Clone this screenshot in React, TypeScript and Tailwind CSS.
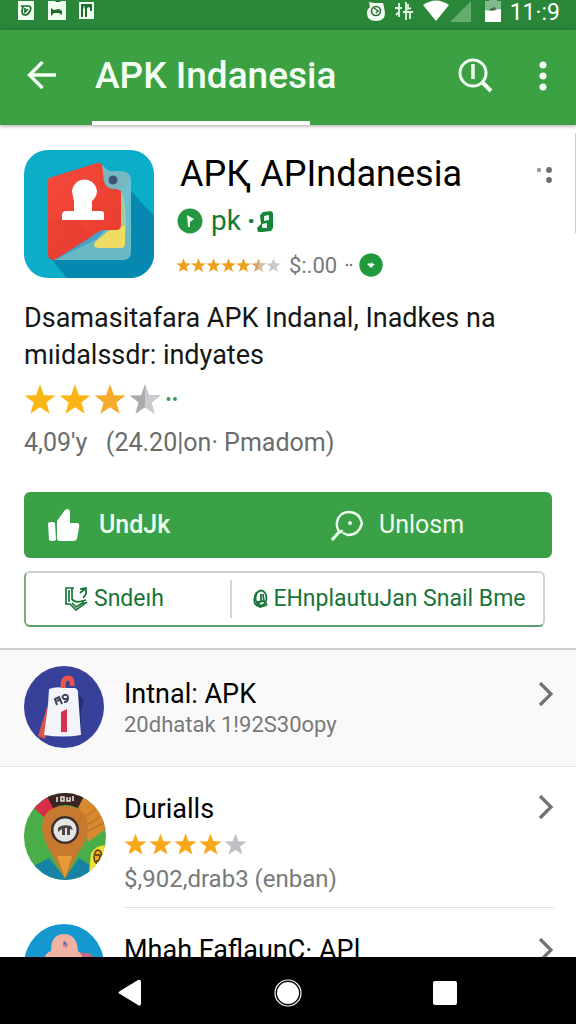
import React from "react";

const STAR = "M12 1l3 8.1 8.6.3-6.8 5.3 2.4 8.3L12 18.2 4.8 23l2.4-8.3L.4 9.4 9 9.1z";

function Star({ className, color, half }: { className: string; color: string; half?: string }) {
  return (
    <svg viewBox="0 0 24 24" className={className} aria-hidden="true">
      <path d={STAR} fill={color} />
      {half && <path d="M12 1l3 8.1 8.6.3-6.8 5.3 2.4 8.3L12 18.2z" fill={half} />}
    </svg>
  );
}

function StatusBar() {
  return (
    <div className="flex h-[30px] shrink-0 items-start justify-between bg-[#2a8638] pr-4 pl-[18px] text-white">
      <div className="flex gap-3">
        <svg viewBox="0 0 18 20" className="h-5 w-[18px]">
          <path d="M0 1h16v19H0z" fill="#effff0" />
          <path d="M3 6h8q3 1 1 5t-5 4-3-4l1-5M7 8v4l3-3" fill="none" stroke="#206b2d" strokeWidth="1.7" />
        </svg>
        <svg viewBox="0 0 18 20" className="h-5 w-[18px]">
          <path d="M0 1h18v19H0z" fill="#effff0" />
          <path d="M3 8l3 2 5-1 3 2v4l-3-2-5 0-3 3zM7 1h6l-1 1H8z" fill="#206b2d" />
        </svg>
        <svg viewBox="0 0 18 20" className="h-5 w-[18px]">
          <path d="M1 2h15v17H1z" fill="#effff0" />
          <path d="M3 4h11v7h-2V8l-1-1-2 1v9H7V9L5 8v9H3z" fill="#206b2d" />
          <path d="M6 6v9" stroke="#effff0" />
        </svg>
      </div>
      <div className="flex items-start">
        <svg viewBox="0 0 20 22" className="h-[22px] w-5">
          <path d="M3 2l5 1h5l4 0 1 4 1 6q0 8-9 8t-9-8q0-4 3-6z" fill="#f4fff4" />
          <circle cx="10" cy="11" r="4.5" fill="none" stroke="#2a6b35" strokeWidth="1.6" />
          <path d="M8 8l4 3-2 2" fill="none" stroke="#2a6b35" strokeWidth="1.5" />
        </svg>
        <svg viewBox="0 0 20 22" className="ml-2 h-[22px] w-5">
          <path d="M5 3v5M1 8h7M5 9v8M2 15l3-3M12 2v18M9 12h10M14 4v5l3-1M16 12v7" fill="none" stroke="#e4f7e5" strokeWidth="1.8" />
        </svg>
        <svg viewBox="0 0 28 22" className="ml-2 h-[22px] w-7">
          <path d="M1 5Q14-4 27 5L14 21z" fill="#fff" />
        </svg>
        <svg viewBox="0 0 22 22" className="h-[22px] w-[22px]">
          <path d="M21 1v21H0z" fill="#64ad6c" />
        </svg>
        <svg viewBox="0 0 18 22" className="ml-3 h-[22px] w-[18px]">
          <path d="M1 1h4V0h8v1h4v21H1z" fill="#82b98a" />
          <path d="M1 10l4 1 2-3 4 2 6-1v13H1z" fill="#fff" />
          <path d="M5 9l6-2 1 3-5 1z" fill="#436d4a" />
        </svg>
        <span className="ml-2 text-[23px] leading-[26px]">11·:9</span>
      </div>
    </div>
  );
}

function TopBar() {
  return (
    <header className="relative z-10 flex h-[95px] shrink-0 items-stretch bg-[#3ba143] text-[#f3fff2] shadow-[0_1px_4px_rgba(0,0,0,0.35)]">
      <button type="button" aria-label="Back" className="mb-1 flex w-[92px] items-center pl-[27px]">
        <svg viewBox="0 0 30 30" className="h-[30px] w-[30px]" fill="none" stroke="currentColor" strokeWidth="3.4">
          <path d="M29 14H3M15.500 1L2.500 14l13 13" />
        </svg>
      </button>
      <div className="flex w-[218px] flex-col justify-center border-b-4 border-white pl-[3px]">
        <h1 className="text-[37px] leading-[44px] font-medium whitespace-nowrap">APK Indanesia</h1>
      </div>
      <div className="mb-1 ml-auto flex items-center pr-3">
        <button type="button" aria-label="Search" className="mr-7">
          <svg viewBox="0 0 36 36" className="h-9 w-9" fill="none" stroke="currentColor" strokeWidth="3">
            <circle cx="15" cy="15" r="13" />
            <path d="M24 24l9 9" strokeWidth="4" />
            <path d="M15 6v15" strokeWidth="3.500" />
          </svg>
        </button>
        <button type="button" aria-label="More options" className="px-2">
          <svg viewBox="0 0 10 30" className="h-[30px] w-[26px]" fill="currentColor">
            <circle cx="5" cy="4" r="3.500" />
            <circle cx="5" cy="15" r="3.500" />
            <circle cx="5" cy="26" r="3.500" />
          </svg>
        </button>
      </div>
    </header>
  );
}

function AppIcon() {
  return (
    <svg viewBox="0 0 130 128" className="h-32 w-[130px] shrink-0" aria-hidden="true">
      <defs>
        <clipPath id="tile"><rect width="130" height="128" rx="24" /></clipPath>
        <linearGradient id="sheet" x1="0" y1="0" x2="0" y2="1">
          <stop stopColor="#6cc3d3" /><stop offset="1" stopColor="#68b8c3" />
        </linearGradient>
        <linearGradient id="red" x1="0" y1="0" x2="1" y2="1">
          <stop stopColor="#f44a3c" /><stop offset="1" stopColor="#e83b2d" />
        </linearGradient>
      </defs>
      <g clipPath="url(#tile)">
        <rect width="130" height="128" fill="#0badc8" />
        <path d="M105 39l25 27v62H43l-15-18z" fill="#0788b0" />
        <path d="M78 22h21q8 0 8 9v71q0 8-9 8H29l49-35z" fill="url(#sheet)" />
        <path d="M98 42q5 15 4 39l-16 8z" fill="#dbd978" opacity=".5" />
        <path d="M31 110l42-21 8-9-12 2z" fill="#4b9fc5" />
        <path d="M84 81l17-6v19q0 4-5 4H75q-7 0-4-6z" fill="#f0dc62" />
        <path d="M25 28l48-15q4-1 6 4l4 15q2 6 10 7l4 2v34q0 5-5 5H81q-5 0-10 4l-39 25q-8 3-8-5V36q-1-6 1-8z" fill="url(#red)" />
        <path d="M48 67l21 20-37 22q-8 1-8-6V70z" fill="#df3930" opacity=".25" />
        <path d="M78 15l7 6h12q9 0 8 10l-7 8h-8q-8 0-10-8z" fill="#76b8c2" />
        <circle cx="89" cy="30" r="4.500" fill="#405575" />
        <path d="M48 42a12.500 12.500 0 1 1 25 0q-1 6-5 9v10h9q3 0 3 3v6H38v-5q0-4 4-4h8V51z" fill="#fff" />
      </g>
    </svg>
  );
}

const ratingColors = ["#eda01d", "#eda01d", "#eda01d", "#eda01d", "#eda01d", "#dfa25c", "#c8c9ce"];

function AppSummary() {
  return (
    <section className="relative bg-[#fefffe] px-6 pt-[25px] pb-[21px]">
      <div className="absolute top-2 right-0 h-[100px] w-px bg-[#b7d8b9]" />
      <div className="flex items-start gap-[26px]">
        <AppIcon />
        <div className="min-w-0 flex-1">
          <div className="flex h-12 items-center justify-between">
            <h2 className="text-[36px] leading-[48px] whitespace-nowrap text-black">APҚ APIndanesia</h2>
            <button type="button" aria-label="App options" className="-mr-0.5">
              <svg viewBox="0 0 20 20" className="h-5 w-5" fill="#6c706d">
                <circle cx="5" cy="6" r="2.200" opacity=".7" />
                <circle cx="15" cy="6" r="2.900" />
                <circle cx="15" cy="16" r="2.900" />
              </svg>
            </button>
          </div>
          <div className="-ml-1 flex h-[46px] items-center text-[28px] text-[#187a32]">
            <svg viewBox="0 0 26 26" className="mr-2 ml-px h-[26px] w-[26px]">
              <circle cx="13" cy="13" r="12.500" fill="#259740" />
              <path d="M10 7l7 4-4 3v5h-2z" fill="#effff1" />
            </svg>
            <span>pk</span>
            <span className="ml-1.5 font-bold">·</span>
            <svg viewBox="0 0 17 21" className="ml-0.5 h-[21px] w-[17px]">
              <path d="M3 4l3-3 8-1 2 2v15l-2 3-9 1H1l-1-4 4-4z" fill="#14863a" />
              <path d="M7 5l5-1v5l-5 1zM5 13l5-1v5H5z" fill="#e4f5e8" />
            </svg>
          </div>
          <div className="-ml-1 flex h-[42px] items-center text-[22px] text-[#777a79]">
            {ratingColors.map((c, i) => (
              <Star key={i} className="h-4 w-[15px]" color={c} half={i === 5 ? "#d5bfae" : undefined} />
            ))}
            <span className="ml-2">$:.00</span>
            <svg viewBox="0 0 8 4" className="ml-2 h-1 w-2" fill="#777a79">
              <circle cx="2" cy="2" r="1.300" /><circle cx="6" cy="2" r="1.300" />
            </svg>
            <svg viewBox="0 0 24 24" className="ml-1.5 h-6 w-6">
              <circle cx="12" cy="12" r="11.700" fill="#219a3b" />
              <path d="M8 11l3-1 1 1 1-2 1 2 2 0-4 4z" fill="#f4fff4" />
            </svg>
          </div>
        </div>
      </div>
      <p className="mt-3.5 text-[27px] leading-[37px] text-[#151716]">
        Dsamasitafara APK Indanal, Inadkes na<br />mıidalssdr: indyates
      </p>
      <div className="mt-[9px] flex items-center gap-[3px]">
        <Star className="h-8 w-8" color="#fbb615" />
        <Star className="h-8 w-8" color="#fbb615" />
        <Star className="h-8 w-8" color="#f8aa2d" />
        <Star className="h-8 w-8" color="#a9abae" half="#c9cbce" />
        <svg viewBox="0 0 12 4" className="ml-0.5 h-1 w-3" fill="#32985c">
          <circle cx="2.500" cy="2" r="1.900" /><circle cx="9" cy="2" r="1.900" />
        </svg>
      </div>
      <p className="mt-2.5 text-[25px] leading-9 whitespace-pre text-[#6a6d6c]">4,09'y   (24.20|on· Pmadom)</p>
      <div className="mt-[31px] grid h-[66px] grid-cols-[289fr_239fr] rounded-md bg-[#3ba146] text-[25px] font-medium text-[#effff0]">
        <button type="button" className="flex items-center pl-6">
          <svg viewBox="0 0 32 34" className="mr-[19px] h-[34px] w-8" fill="#fff">
            <path d="M0 15q4-2 7 0l1 17q-4 2-7 0zM9 13l8-11q4-3 5 2v11h7q3 0 2 4l-2 12q-1 2-4 2H12q-3 0-3-3z" />
          </svg>
          UndJk
        </button>
        <button type="button" className="flex items-center pl-[18px] font-normal">
          <svg viewBox="0 0 32 32" className="mr-4 h-8 w-8" fill="none" stroke="currentColor" strokeWidth="2.400">
            <path d="M10 24Q5 20 6 13 8 3 18 3q10 0 13 11-3 12-14 12l-5-2" />
            <path d="M12 22l-4 1-7 8" strokeWidth="3" />
            <circle cx="19" cy="14" r="2" fill="currentColor" stroke="none" />
          </svg>
          Unlosm
        </button>
      </div>
      <div className="mt-[13px] mr-[7px] grid h-14 grid-cols-[208fr_313fr] items-center rounded-md border-2 border-[#cdd3ce] border-b-[#5aa06b] border-l-[#75ae80] text-[23px] text-[#187438]">
        <button type="button" className="flex h-[38px] items-center border-r-2 border-[#d3d6d4] pl-[38px]">
          <svg viewBox="0 0 26 26" className="mr-1 h-[26px] w-[26px]" fill="none" stroke="currentColor" strokeWidth="1.700">
            <path d="M10 2H2v16h4l6 6 11-8M8 2v11q3 5 14 1M5 4v12M8 17l4 4 8-5M16 3l6-1v6l-3 4M16 7l6-5" />
          </svg>
          Sndeıh
        </button>
        <button type="button" className="flex items-center pl-[21px] whitespace-nowrap">
          <svg viewBox="0 0 16 20" className="mr-1 h-5 w-4" fill="none" stroke="currentColor" strokeWidth="1.800">
            <ellipse cx="8" cy="9" rx="5.500" ry="7.500" />
            <path d="M4 3Q0 8 2 15l5 3 7-2M8 5v7l-5 5M10 5l1 8M4 13l7-1 3 4" />
          </svg>
          EHnplautuJan Snail Bme
        </button>
      </div>
    </section>
  );
}

function JerseyAvatar() {
  return (
    <svg viewBox="0 0 80 82" className="h-[82px] w-20 shrink-0" aria-hidden="true">
      <defs><clipPath id="jersey"><ellipse cx="40" cy="41" rx="40" ry="41" /></clipPath></defs>
      <g clipPath="url(#jersey)">
        <path d="M0 0h80v82H0z" fill="#38419a" />
        <path d="M53 27l7 7-3 13v24l-5-4z" fill="#252e76" />
        <path d="M24 38l2 17-5 18-7-3z" fill="#df5047" />
        <path d="M40 24q-3-11 4-12 5 0 4 8" fill="none" stroke="#ec5548" strokeWidth="5" />
        <path d="M25 23q8-3 14-1h11q4 0 4 5l3 42q-18 3-37 0l4-30z" fill="#f4f3f9" />
        <path d="M37 46l6-3v23h-6z" fill="#d6324c" />
        <path d="M33 39l-2-6 4-2 3 7m-5-3l4-2M40 29q4-1 4 3t-4 4M40 29q-3 2 0 4h4" fill="none" stroke="#40425a" strokeWidth="2" />
      </g>
    </svg>
  );
}

function PinAvatar() {
  return (
    <svg viewBox="0 0 82 87" className="-mr-0.5 h-[87px] w-[82px] shrink-0" aria-hidden="true">
      <defs><clipPath id="pin"><ellipse cx="41" cy="43.500" rx="41" ry="43.500" /></clipPath></defs>
      <g clipPath="url(#pin)">
        <path d="M0 0h82v87H0z" fill="#49ad48" />
        <path d="M10 15L27 0l7 14-13 11z" fill="#d82c48" />
        <path d="M58 3l24 13v20L64 49 54 14z" fill="#d88930" />
        <path d="M61 24l18-13M63 32l19-12M62 39l18-9" stroke="#c17428" strokeWidth="1.500" />
        <path d="M8 74l17-9 16 20 14-20 12 8v14H8z" fill="#1683a5" />
        <path d="M18 35Q18 14 40 13q24 0 24 22 0 12-10 25L41 86Q33 71 27 60 19 47 18 35z" fill="#c77a2f" />
        <path d="M33 63h15l-7 22z" fill="#e59b38" />
        <path d="M23 3Q42-4 60 3l-6 12Q41 9 29 15z" fill="#3b2421" />
        <path d="M33 4v5M37 4h3v4h-3zM43 4v4h3V4M49 3v5" fill="none" stroke="#eddfd6" strokeWidth="1.600" />
        <circle cx="41" cy="37" r="14" fill="#3f3030" />
        <circle cx="41" cy="37" r="11.500" fill="#e4e4e3" />
        <path d="M34 35q4-4 13-2l2 4-3-1v6h-3v-7h-2v7h-3v-6l-4 3z" fill="#4c4746" />
        <path d="M67 60q8-11 18-6v26H65z" fill="#f4df35" />
        <ellipse cx="74" cy="64" rx="4" ry="7" fill="#eaa919" stroke="#594219" strokeWidth="1.500" />
        <path d="M71 62h6M72 68q4 1 4-5" fill="none" stroke="#463616" strokeWidth="1.500" />
      </g>
    </svg>
  );
}

function FaceAvatar() {
  return (
    <svg viewBox="0 0 80 82" className="h-[82px] w-20 shrink-0" aria-hidden="true">
      <defs><clipPath id="face"><ellipse cx="40" cy="41" rx="40" ry="41" /></clipPath></defs>
      <g clipPath="url(#face)">
        <path d="M0 0h80v82H0z" fill="#1598cf" />
        <path d="M56 28l4 1 5 0 6 5-3 9H54z" fill="#bf6e86" />
        <path d="M20 45q-3-14 7-18 0-17 13-17 13 0 14 17 5 3 8 18v37H18z" fill="#efb2a3" />
        <path d="M39 17l5 3-1 4-4-2z" fill="#b78094" />
        <path d="M40 18l2 2" stroke="#596ba3" strokeWidth="2" />
      </g>
    </svg>
  );
}

function Chevron() {
  return (
    <svg viewBox="0 0 16 28" className="ml-auto h-7 w-4 shrink-0" fill="none" stroke="#707372" strokeWidth="3.200" aria-hidden="true">
      <path d="M2 3l11 11L2 25" />
    </svg>
  );
}

function AppList() {
  return (
    <ul className="bg-[#fefffe]">
      <li className="border-t-2 border-b border-t-[#cfd0cf] border-b-[#e3e4e3] bg-[#f9f9f9]">
        <a href="#intnal" className="flex h-[116px] items-start gap-5 pt-4 pr-[22px] pl-6">
          <JerseyAvatar />
          <div className="pt-3">
            <h3 className="text-[27px] leading-8 text-black">Intnal: APK</h3>
            <p className="text-[22px] leading-[30px] text-[#777979]">20dhatak 1!92S30opy</p>
          </div>
          <div className="ml-auto pt-3.5"><Chevron /></div>
        </a>
      </li>
      <li>
        <a href="#durialls" className="flex h-[141px] items-start gap-5 pt-[26px] pr-[22px] pl-6">
          <PinAvatar />
          <div className="flex h-[115px] flex-1 items-start border-b border-[#e1e2e1]">
            <div>
              <h3 className="text-[27px] leading-8 text-black">Durialls</h3>
              <div className="mt-[7px] flex gap-0.5">
                {["#faa719", "#faa719", "#faa719", "#faa719", "#bfc0c4"].map((c, i) => (
                  <Star key={i} className="h-6 w-[23px]" color={c} />
                ))}
              </div>
              <p className="mt-1.5 text-[24px] leading-[34px] text-[#777979]">$,902,drab3 (enban)</p>
            </div>
            <Chevron />
          </div>
        </a>
      </li>
      <li>
        <a href="#mhah" className="flex items-start gap-5 pt-4 pr-[22px] pl-6">
          <FaceAvatar />
          <h3 className="pt-2.5 text-[27px] leading-8 text-black">Mhah FaflaunC· APl</h3>
          <div className="ml-auto pt-3"><Chevron /></div>
        </a>
      </li>
    </ul>
  );
}

function NavigationBar() {
  return (
    <nav aria-label="System navigation" className="grid h-[67px] shrink-0 grid-cols-[209fr_157fr_157fr_53fr] items-center bg-black pt-1 text-white">
      <button type="button" aria-label="Back" className="flex justify-center pl-[50px]">
        <svg viewBox="0 0 24 28" className="h-7 w-6" fill="currentColor"><path d="M2 12L20 1q3-1 3 2v21q0 4-3 2L2 15q-3-1 0-3z" /></svg>
      </button>
      <button type="button" aria-label="Home" className="flex justify-center">
        <svg viewBox="0 0 28 28" className="h-7 w-7"><circle cx="14" cy="14" r="13" fill="none" stroke="currentColor" strokeWidth="1.200" /><circle cx="14" cy="14" r="11" fill="currentColor" /></svg>
      </button>
      <button type="button" aria-label="Recent apps" className="flex justify-center">
        <svg viewBox="0 0 24 24" className="h-6 w-6" fill="currentColor"><rect width="24" height="24" rx="2" /></svg>
      </button>
    </nav>
  );
}

export default function App() {
  return (
    <div className="flex h-screen flex-col overflow-hidden bg-white font-['Roboto',sans-serif]">
      <StatusBar />
      <TopBar />
      <main className="min-h-0 flex-1 overflow-hidden">
        <AppSummary />
        <AppList />
      </main>
      <NavigationBar />
    </div>
  );
}
